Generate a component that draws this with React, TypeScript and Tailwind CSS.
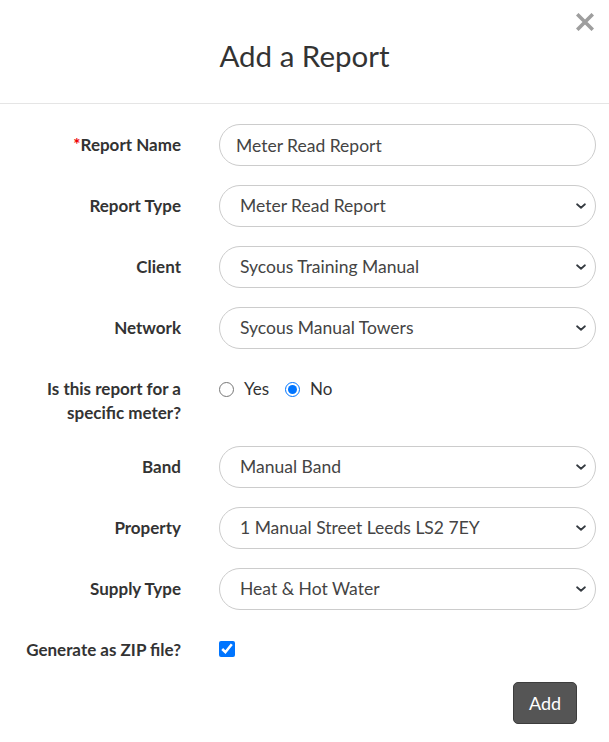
import React from 'react';

const labelCls =
  "w-[166px] shrink-0 pt-[9px] text-right text-[17px] leading-6 font-bold text-[#333]";
const fieldCls =
  "h-[42px] w-[377px] rounded-full border border-[#cccccc] bg-white text-[17.5px] text-[#444] outline-none";

function Chevron() {
  return (
    <svg
      className="pointer-events-none absolute right-[8px] top-1/2 -translate-y-1/2"
      width="14"
      height="14"
      viewBox="0 0 16 16"
      fill="none"
      stroke="#343a40"
      strokeWidth="2"
      strokeLinecap="round"
      strokeLinejoin="round"
    >
      <path d="M3.5 6l4.5 4 4.5-4" />
    </svg>
  );
}

function SelectField({ value }: { value: string }) {
  return (
    <div className="relative">
      <select
        defaultValue={value}
        className={`${fieldCls} appearance-none pl-[20px] pr-[36px]`}
        style={{ fontFamily: 'Lato, sans-serif' }}
      >
        <option>{value}</option>
      </select>
      <Chevron />
    </div>
  );
}

function Row({ label, children }: { label: React.ReactNode; children: React.ReactNode }) {
  return (
    <div className="mb-[19px] flex items-start">
      <label className={labelCls}>{label}</label>
      <div className="ml-[38px]">{children}</div>
    </div>
  );
}

export default function App() {
  return (
    <div className="min-h-[742px] w-[609px] bg-white" style={{ fontFamily: 'Lato, sans-serif' }}>
      {/* Header */}
      <div className="relative h-[104px] border-b border-[#e5e5e5]">
        <h4 className="pt-[36px] text-center text-[29.5px] leading-10 font-normal text-[#333]">
          Add a Report
        </h4>
        <button className="absolute right-[15px] top-[13px] p-0" aria-label="Close">
          <svg width="18" height="18" viewBox="0 0 18 18" stroke="#9e9e9e" strokeWidth="3.6" strokeLinecap="square">
            <path d="M2.5 2.5l13 13M15.5 2.5l-13 13" />
          </svg>
        </button>
      </div>

      {/* Body */}
      <div className="pl-[15px] pt-[20px]">
        <Row
          label={
            <>
              <span className="text-[#e00]">*</span>Report Name
            </>
          }
        >
          <input
            defaultValue="Meter Read Report"
            className={`${fieldCls} px-[16px]`}
            style={{ fontFamily: 'Lato, sans-serif' }}
          />
        </Row>
        <Row label="Report Type">
          <SelectField value="Meter Read Report" />
        </Row>
        <Row label="Client">
          <SelectField value="Sycous Training Manual" />
        </Row>
        <Row label="Network">
          <SelectField value="Sycous Manual Towers" />
        </Row>

        <div className="mb-[19px] flex min-h-[59px] items-start">
          <label className={labelCls}>
            Is this report for a
            <br />
            specific meter?
          </label>
          <div className="ml-[38px] flex items-center pt-[9px] text-[17px] leading-6 text-[#333]">
            <label className="flex items-center">
              <input type="radio" name="specific" className="m-0 h-[15px] w-[15px]" />
              <span className="ml-[10px]">Yes</span>
            </label>
            <label className="ml-[16px] flex items-center">
              <input type="radio" name="specific" defaultChecked className="m-0 h-[15px] w-[15px]" />
              <span className="ml-[10px]">No</span>
            </label>
          </div>
        </div>

        <Row label="Band">
          <SelectField value="Manual Band" />
        </Row>
        <Row label="Property">
          <SelectField value="1 Manual Street Leeds LS2 7EY" />
        </Row>
        <Row label="Supply Type">
          <SelectField value="Heat & Hot Water" />
        </Row>

        <div className="flex items-start">
          <label className={labelCls}>Generate as ZIP file?</label>
          <div className="ml-[38px] flex h-[42px] items-center pb-[2px]">
            <input type="checkbox" defaultChecked className="m-0 h-[16px] w-[16px]" />
          </div>
        </div>

        <div className="mt-[11px] flex justify-end pr-[32px]">
          <button className="h-[42px] w-[64px] rounded-[5px] border border-[#3d3d3d] bg-[#555] text-[18px] text-white">
            Add
          </button>
        </div>
      </div>
    </div>
  );
}
